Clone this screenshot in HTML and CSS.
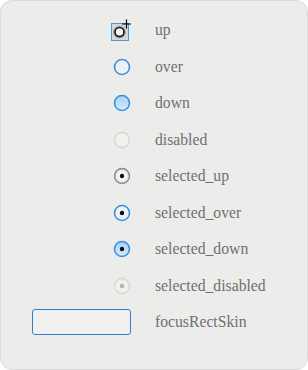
FILE: index.html
```
<!DOCTYPE html>
<html lang="en">
<head>
    <meta charset="UTF-8">
    <meta name="viewport" content="width=device-width, initial-scale=1.0">
    <title>Radio skins</title>
    <link rel="stylesheet" href="styles.css">
</head>
<body>
    <div class="panel">
        <div class="skin-list">
            <div class="icon">
                <svg width="20" height="22" viewBox="0 0 20 22">
                    <defs>
                        <radialGradient id="upg" cx="50%" cy="45%" r="55%">
                            <stop offset="0" stop-color="#fafafa"/>
                            <stop offset="1" stop-color="#9a9a9a"/>
                        </radialGradient>
                    </defs>
                    <rect x="0.5" y="4.5" width="17" height="17" fill="#d8d8d8" stroke="#4a9ad8"/>
                    <circle cx="8.5" cy="13" r="6.5" fill="url(#upg)"/>
                    <circle cx="8.5" cy="13" r="4.5" fill="#f4f4f4" stroke="#111" stroke-width="1.6"/>
                    <path d="M15.5 0.5 V9.5 M11 5 H20" stroke="#000" stroke-width="1.2"/>
                </svg>
            </div>
            <div class="label">up</div>

            <div class="icon">
                <svg width="18" height="18" viewBox="0 0 18 18">
                    <circle cx="9" cy="9" r="7.5" fill="#eef2f6" stroke="#3c90e0" stroke-width="1.6"/>
                </svg>
            </div>
            <div class="label">over</div>

            <div class="icon">
                <svg width="18" height="18" viewBox="0 0 18 18">
                    <defs>
                        <linearGradient id="dng" x1="0" y1="0" x2="0" y2="1">
                            <stop offset="0" stop-color="#a8d2f8"/>
                            <stop offset="1" stop-color="#d4eafc"/>
                        </linearGradient>
                    </defs>
                    <circle cx="9" cy="9" r="7.5" fill="url(#dng)" stroke="#3c90e0" stroke-width="1.6"/>
                </svg>
            </div>
            <div class="label">down</div>

            <div class="icon">
                <svg width="18" height="18" viewBox="0 0 18 18">
                    <circle cx="9" cy="9" r="7.5" fill="#f1f0ea" stroke="#d6d6d6" stroke-width="1.4"/>
                </svg>
            </div>
            <div class="label">disabled</div>

            <div class="icon">
                <svg width="18" height="18" viewBox="0 0 18 18">
                    <defs>
                        <radialGradient id="sug" cx="50%" cy="50%" r="50%">
                            <stop offset="0.6" stop-color="#f6f6f6"/>
                            <stop offset="1" stop-color="#cfcfcf"/>
                        </radialGradient>
                    </defs>
                    <circle cx="9" cy="9" r="7.5" fill="url(#sug)" stroke="#8c8c8c" stroke-width="1.4"/>
                    <circle cx="9" cy="9" r="2.2" fill="#111"/>
                </svg>
            </div>
            <div class="label">selected_up</div>

            <div class="icon">
                <svg width="18" height="18" viewBox="0 0 18 18">
                    <circle cx="9" cy="9" r="7.5" fill="#eef2f6" stroke="#3c90e0" stroke-width="1.6"/>
                    <circle cx="9" cy="9" r="2.2" fill="#111"/>
                </svg>
            </div>
            <div class="label">selected_over</div>

            <div class="icon">
                <svg width="18" height="18" viewBox="0 0 18 18">
                    <defs>
                        <linearGradient id="sdg" x1="0" y1="0" x2="0" y2="1">
                            <stop offset="0" stop-color="#a8d2f8"/>
                            <stop offset="1" stop-color="#d4eafc"/>
                        </linearGradient>
                    </defs>
                    <circle cx="9" cy="9" r="7.5" fill="url(#sdg)" stroke="#3c90e0" stroke-width="1.6"/>
                    <circle cx="9" cy="9" r="2.2" fill="#111"/>
                </svg>
            </div>
            <div class="label">selected_down</div>

            <div class="icon">
                <svg width="18" height="18" viewBox="0 0 18 18">
                    <circle cx="9" cy="9" r="7.5" fill="#f1f0ea" stroke="#d6d6d6" stroke-width="1.4"/>
                    <circle cx="9" cy="9" r="2.2" fill="#b4b4b4"/>
                </svg>
            </div>
            <div class="label">selected_disabled</div>

            <div class="icon">
                <div class="focus-rect"></div>
            </div>
            <div class="label">focusRectSkin</div>
        </div>
    </div>
</body>
</html>
```
FILE: styles.css
```
body{
    margin: 0;
    background: #ffffff;
}
.panel{
    width: 308px;
    height: 370px;
    box-sizing: border-box;
    background-color: #ececeb;
    border: 1px solid #dadada;
    border-radius: 12px;
    padding-top: 11px;
}
.skin-list{
    display: grid;
    grid-template-columns: 130px auto;
    grid-auto-rows: 36.5px;
    column-gap: 24px;
    align-items: center;
}
.icon{
    display: flex;
    justify-content: flex-end;
    align-items: center;
}
.icon svg{
    display: block;
}
.label{
    font-family: "Liberation Serif", "Times New Roman", serif;
    font-size: 15.7px;
    color: #707070;
}
.focus-rect{
    width: 99px;
    height: 26px;
    box-sizing: border-box;
    border: 1.5px solid #2f7fcc;
    border-radius: 3px;
    background-color: #f0f0ef;
}
```
